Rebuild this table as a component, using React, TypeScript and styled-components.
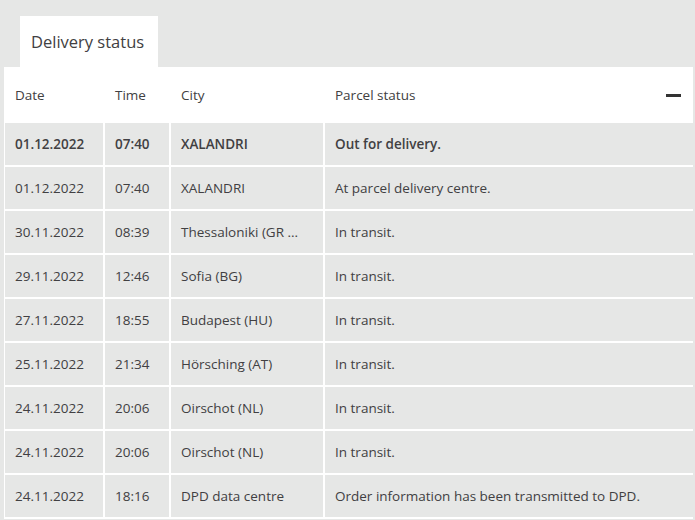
import React from 'react'
import styled, { createGlobalStyle } from 'styled-components'

const GlobalStyle = createGlobalStyle`
    html, body {
        margin: 0;
        padding: 0;
        background: #e6e7e6;
    }
    body {
        font-family: 'Open Sans', 'Liberation Sans', sans-serif;
        color: #414042;
    }
`

interface ScanEvent {
    date: string
    time: string
    city: string
    status: string
}

const events: ScanEvent[] = [
    { date: '01.12.2022', time: '07:40', city: 'XALANDRI', status: 'Out for delivery.' },
    { date: '01.12.2022', time: '07:40', city: 'XALANDRI', status: 'At parcel delivery centre.' },
    { date: '30.11.2022', time: '08:39', city: 'Thessaloniki (GR ...', status: 'In transit.' },
    { date: '29.11.2022', time: '12:46', city: 'Sofia (BG)', status: 'In transit.' },
    { date: '27.11.2022', time: '18:55', city: 'Budapest (HU)', status: 'In transit.' },
    { date: '25.11.2022', time: '21:34', city: 'Hörsching (AT)', status: 'In transit.' },
    { date: '24.11.2022', time: '20:06', city: 'Oirschot (NL)', status: 'In transit.' },
    { date: '24.11.2022', time: '20:06', city: 'Oirschot (NL)', status: 'In transit.' },
    { date: '24.11.2022', time: '18:16', city: 'DPD data centre', status: 'Order information has been transmitted to DPD.' },
]

const Page = styled.div`
    padding-top: 16px;
`

const Tabs = styled.div`
    display: flex;
    padding-left: 20px;
`

const Tab = styled.div`
    background: #fff;
    height: 51px;
    width: 138px;
    padding: 0 11px;
    box-sizing: border-box;
    display: flex;
    align-items: center;
    font-size: 16.5px;
    white-space: nowrap;
    color: #414042;
`

const Table = styled.div`
    margin-left: 4px;
    width: 689px;
    border-left: 1px solid #fff;
    display: grid;
    grid-template-columns: 98px 64px 152px 1fr;
    column-gap: 2px;
    row-gap: 2px;
    background: #fff;
    padding-bottom: 2px;
    box-sizing: border-box;
`

const HeadCell = styled.div`
    height: 56px;
    display: flex;
    align-items: center;
    justify-content: space-between;
    padding: 0 10px;
    font-size: 13.5px;
    background: #fff;
    margin-bottom: -2px;
`

const Cell = styled.div<{ $bold?: boolean }>`
    height: 42px;
    display: flex;
    align-items: center;
    padding: 0 10px;
    background: #e6e7e6;
    font-size: 13.5px;
    font-weight: ${(p) => (p.$bold ? 600 : 400)};
    white-space: nowrap;
    overflow: hidden;
`

const Collapse = styled.span`
    display: block;
    width: 15px;
    height: 3px;
    margin-right: 2px;
    background: #333;
`

const App = () => {
    return (
        <Page>
            <GlobalStyle />
            <Tabs>
                <Tab>Delivery status</Tab>
            </Tabs>
            <Table>
                <HeadCell>Date</HeadCell>
                <HeadCell>Time</HeadCell>
                <HeadCell>City</HeadCell>
                <HeadCell>
                    Parcel status
                    <Collapse />
                </HeadCell>
                {events.map((ev, i) => (
                    <React.Fragment key={i}>
                        <Cell $bold={i === 0}>{ev.date}</Cell>
                        <Cell $bold={i === 0}>{ev.time}</Cell>
                        <Cell $bold={i === 0}>{ev.city}</Cell>
                        <Cell $bold={i === 0}>{ev.status}</Cell>
                    </React.Fragment>
                ))}
            </Table>
        </Page>
    )
}

export default App
